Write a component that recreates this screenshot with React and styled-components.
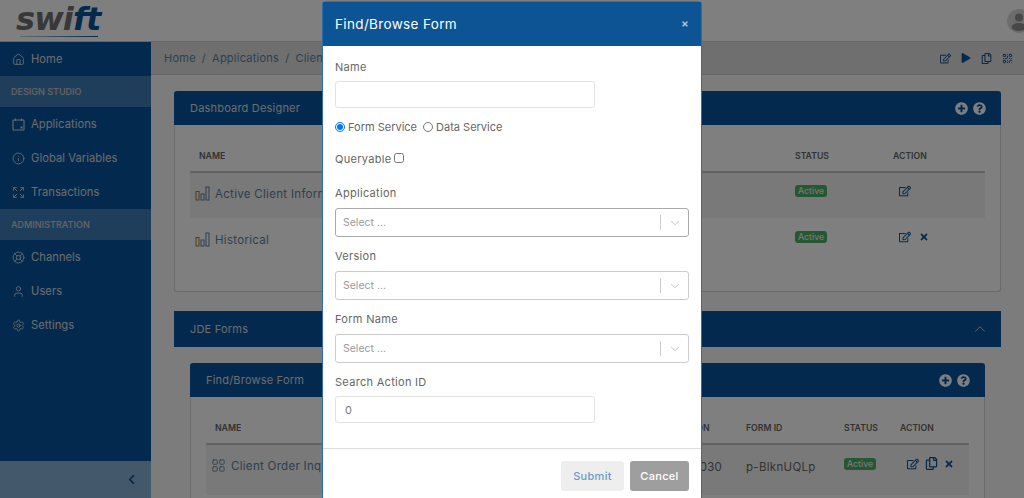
import React from 'react';
import styled, { createGlobalStyle } from 'styled-components';
import {
  FaRegEdit, FaTimes, FaPlay, FaPlusCircle, FaQuestionCircle, FaRegCopy, FaChevronLeft,
} from 'react-icons/fa';
import {
  Home, Info, Expand, LifeBuoy, User, Settings, ChevronDown, ChevronUp, LayoutGrid, Files, QrCode,
} from 'lucide-react';

const GlobalStyle = createGlobalStyle`
  html, body { margin: 0; padding: 0; height: 498px; overflow: hidden; background: #fff; }
  * { box-sizing: border-box; }
  body { font-family: Inter, "Open Sans", sans-serif; color: #555; }
`;

const Page = styled.div`
  position: relative;
  width: 1024px;
  height: 498px;
  overflow: hidden;
  display: flex;
  flex-direction: column;
`;

const Overlay = styled.div`
  position: absolute;
  inset: 0;
  background: rgba(0, 0, 0, 0.5);
`;

const TopBar = styled.header`
  height: 42px;
  flex: none;
  display: flex;
  align-items: center;
  justify-content: space-between;
  padding: 0 0 0 16px;
  background: #fff;
  border-bottom: 1px solid #ccc;
`;

const Logo = styled.div`
  position: relative;
  font-family: "DejaVu Sans", sans-serif;
  font-weight: 700;
  font-style: italic;
  font-size: 32px;
  line-height: 36px;
  letter-spacing: -0.9px;
  color: #707070;
  width: 84px;
  height: 36px;
  margin-top: -3px;
  white-space: nowrap;
  &::after {
    content: '';
    position: absolute;
    left: 4px;
    right: 2px;
    bottom: 0;
    height: 1.5px;
    background: linear-gradient(90deg, #c8d4e0, #0b5394);
  }
  span { color: #0b5394; }
`;

const Avatar = styled.div`
  width: 24px;
  height: 24px;
  margin-right: -7px;
  border-radius: 50%;
  background: #d8d8d8;
  color: #909090;
  svg { display: block; }
`;

const Body = styled.div`
  flex: 1;
  display: flex;
  min-height: 0;
`;

const Sidebar = styled.nav`
  width: 151px;
  flex: none;
  display: flex;
  flex-direction: column;
  background: #07559c;
`;

const NavItem = styled.div`
  height: 34px;
  flex: none;
  display: flex;
  align-items: center;
  gap: 6px;
  padding-left: 12px;
  color: #d9d9d9;
  font-size: 11.2px;
  letter-spacing: 0.05px;
  svg { flex: none; }
`;

const NavSection = styled.div`
  height: 31px;
  flex: none;
  display: flex;
  align-items: center;
  padding-left: 11px;
  background: #3c7cb8;
  color: #c4c4c4;
  font-size: 9px;
  font-weight: 600;
`;

const Collapse = styled.div`
  margin-top: auto;
  height: 37px;
  display: flex;
  align-items: center;
  justify-content: flex-end;
  padding-right: 14px;
  background: #88b0d6;
  color: #0b5394;
`;

const Main = styled.main`
  flex: 1;
  min-width: 0;
  background: #f8f8f8;
  overflow: hidden;
`;

const Breadcrumb = styled.div`
  height: 33px;
  display: flex;
  align-items: center;
  justify-content: space-between;
  padding: 0 0 0 13px;
  background: #dedede;
  border-bottom: 1px solid #c8c8c8;
  color: #5d7ea0;
  font-size: 11px;
  letter-spacing: 0.25px;
  white-space: nowrap;
`;

const Crumbs = styled.div`
  display: flex;
  gap: 6px;
`;

const ToolIcons = styled.div`
  display: flex;
  align-items: center;
  gap: 10px;
  margin-right: -11px;
  color: #0b5394;
`;

const Content = styled.div`
  padding: 16px 23px 0;
`;

const Panel = styled.section`
  background: #fff;
  border: 1px solid #d4d4d4;
  border-top: 0;
  border-radius: 3px;
  min-height: ${(p) => p.$minHeight || 0}px;
  margin: ${(p) => (p.$inner ? '16px 16px 0' : '0')};
`;

const PanelHeader = styled.div`
  height: 34px;
  margin: 0 -1px;
  display: flex;
  align-items: center;
  justify-content: space-between;
  padding: 0 15px 0 16px;
  background: #07559c;
  border-radius: 3px 3px 0 0;
  color: #d9d9d9;
  font-size: 11px;
  letter-spacing: 0.2px;
`;

const HeaderIcons = styled.div`
  display: flex;
  gap: 5px;
  color: #fff;
`;

const SectionBar = styled(PanelHeader)`
  height: 36px;
  margin: 19px 0 0;
  border-radius: 0;
  padding-right: 12px;
`;

const TableWrap = styled.div`
  padding: ${(p) => p.$top}px 15px 0;
`;

const Row = styled.div`
  display: grid;
  grid-template-columns: ${(p) => p.$cols};
  padding: 0 9px;
  height: ${(p) => p.$height}px;
  background: ${(p) => (p.$striped ? '#f2f2f2' : 'transparent')};
  align-items: ${(p) => (p.$head ? 'center' : 'start')};
  white-space: nowrap;
`;

const HeadRow = styled(Row)`
  border-bottom: 2px solid #c4c4c4;
  color: #666;
  font-size: 8.7px;
  font-weight: 600;
`;

const NameCell = styled.div`
  display: flex;
  align-items: center;
  gap: 5px;
  margin: ${(p) => p.$top || 13}px 0 0 -4px;
  color: #5d7ea0;
  font-size: 11.5px;
  letter-spacing: 0.3px;
`;

const DataCell = styled.div`
  margin-top: 15px;
  color: #666;
  font-size: 11.5px;
  letter-spacing: 0.3px;
`;

const Badge = styled.span`
  display: inline-block;
  margin-top: ${(p) => p.$top || 12}px;
  padding: 1px 3px;
  width: 32px;
  background: #4caf6a;
  border-radius: 3px;
  color: #e4f1e8;
  font-size: 8.7px;
  line-height: 10px;
  font-weight: 500;
  text-align: center;
`;

const Actions = styled.div`
  display: flex;
  align-items: center;
  gap: ${(p) => p.$gap || 7}px;
  margin: ${(p) => p.$top || 12}px 0 0 ${(p) => p.$left || 6}px;
  color: #0b5394;
`;

const Modal = styled.div`
  position: absolute;
  left: 322px;
  top: 1px;
  width: 380px;
  height: 520px;
  background: #fff;
  border: 1px solid #2a6db0;
  border-top-color: #666;
  border-radius: 4px 4px 0 0;
`;

const ModalHeader = styled.div`
  height: 44px;
  display: flex;
  align-items: center;
  justify-content: space-between;
  padding: 0 12px;
  background: #0d5495;
  color: #fff;
  font-size: 13.5px;
  letter-spacing: 0.35px;
`;

const CloseMark = styled.span`
  color: #b4c6d9;
  display: flex;
`;

const ModalBody = styled.div`
  padding: 13px 12px 0;
`;

const Label = styled.div`
  height: 16px;
  line-height: 16px;
  color: #666;
  font-size: 11px;
  letter-spacing: 0.3px;
  margin-top: ${(p) => p.$top || 0}px;
`;

const TextInput = styled.input`
  display: block;
  width: 260px;
  height: 27px;
  margin-top: ${(p) => p.$top || 6}px;
  padding: 0 9px;
  border: 1px solid #e2e2e2;
  border-radius: 3px;
  color: #777;
  font: 11px Inter, sans-serif;
  outline: none;
`;

const RadioRow = styled.label`
  display: flex;
  align-items: center;
  height: 16px;
  margin-top: ${(p) => p.$top || 0}px;
  color: #666;
  font-size: 11px;
  input { margin: 0 3px 0 0; width: 10px; height: 10px; }
  input + span + input { margin-left: 6px; margin-top: -1px; }
`;

const CheckRow = styled(RadioRow)`
  letter-spacing: 0.3px;
  input { margin: 0 0 2px 3px; width: 10px; height: 10px; }
`;

const SelectBox = styled.div`
  width: 354px;
  height: 29px;
  margin-top: 7px;
  display: flex;
  align-items: center;
  padding-left: 7px;
  border: 1px solid ${(p) => (p.$dark ? '#aaa' : '#ccc')};
  border-radius: 3px;
  color: #999;
  font-size: 10.5px;
`;

const SelectArrow = styled.div`
  margin-left: auto;
  width: 28px;
  height: 15px;
  display: flex;
  align-items: center;
  justify-content: center;
  border-left: 1px solid #ccc;
  color: #bbb;
`;

const ModalFooter = styled.div`
  margin-top: 25px;
  border-top: 1px solid #dcdcdc;
  display: flex;
  justify-content: flex-end;
  gap: 6px;
  padding: 12px 12px 0;
`;

const Button = styled.button`
  height: 30px;
  width: ${(p) => p.$width}px;
  padding: 0;
  border: 0;
  border-radius: 3px;
  background: ${(p) => (p.$primary ? '#eeeeee' : '#9e9e9e')};
  color: ${(p) => (p.$primary ? '#6d9ac9' : '#fff')};
  font: 500 11px Inter, sans-serif;
  letter-spacing: 0.3px;
`;

// three outlined bars, drawn because no package has this exact glyph
const BarsIcon = () => (
  <svg width="15" height="15" viewBox="0 0 15 15" fill="none" stroke="#a87a30" strokeWidth="1">
    <rect x="1" y="5.5" width="3" height="8.5" />
    <rect x="6" y="8" width="3" height="6" stroke="#5d7ea0" />
    <rect x="11" y="1" width="3" height="13" stroke="#5d7ea0" />
  </svg>
);

// square with two tabs on top and a filled corner
const AppsIcon = ({ size }) => (
  <svg width={size} height={size} viewBox="0 0 13 13" fill="none" stroke="currentColor" strokeWidth="1.1">
    <rect x="1" y="2" width="11" height="10" rx="0.5" />
    <path d="M3.5 0.5v2.5M9.5 0.5v2.5" />
    <rect x="8.5" y="8.5" width="2" height="2" fill="currentColor" stroke="none" />
  </svg>
);

const navTop = [
  { icon: AppsIcon, label: 'Applications' },
  { icon: Info, label: 'Global Variables' },
  { icon: Expand, label: 'Transactions' },
];

const navBottom = [
  { icon: LifeBuoy, label: 'Channels' },
  { icon: User, label: 'Users' },
  { icon: Settings, label: 'Settings' },
];

const dashCols = '1fr 98px 83px';
const formCols = '1fr 75px 98px 56px 60px';

const NavRow = ({ icon: Icon, label }) => (
  <NavItem>
    <Icon size={13} strokeWidth={1.6} />
    {label}
  </NavItem>
);

const PanelIcons = () => (
  <HeaderIcons>
    <FaPlusCircle size={13} />
    <FaQuestionCircle size={13} />
  </HeaderIcons>
);

const Select = ({ dark }) => (
  <SelectBox $dark={dark}>
    Select ...
    <SelectArrow>
      <ChevronDown size={14} strokeWidth={1.5} />
    </SelectArrow>
  </SelectBox>
);

export default function App() {
  return (
    <Page>
      <GlobalStyle />
      <TopBar>
        <Logo>swi<span>ft</span></Logo>
        <Avatar>
          <svg width="24" height="24" viewBox="0 0 24 24" fill="currentColor">
            <circle cx="12" cy="8.5" r="4" />
            <ellipse cx="12" cy="18" rx="7.5" ry="4" />
          </svg>
        </Avatar>
      </TopBar>
      <Body>
        <Sidebar>
          <NavRow icon={Home} label="Home" />
          <NavSection>DESIGN STUDIO</NavSection>
          {navTop.map((n) => <NavRow key={n.label} {...n} />)}
          <NavSection>ADMINISTRATION</NavSection>
          {navBottom.map((n) => <NavRow key={n.label} {...n} />)}
          <Collapse><FaChevronLeft size={11} /></Collapse>
        </Sidebar>
        <Main>
          <Breadcrumb>
            <Crumbs>
              <span>Home</span><span>/</span><span>Applications</span><span>/</span><span>Client Order Inquiry</span>
            </Crumbs>
            <ToolIcons>
              <FaRegEdit size={11} />
              <FaPlay size={10} />
              <FaRegCopy size={11} />
              <QrCode size={11} />
              <Files size={12} />
            </ToolIcons>
          </Breadcrumb>
          <Content>
            <Panel $minHeight={201}>
              <PanelHeader>
                Dashboard Designer
                <PanelIcons />
              </PanelHeader>
              <TableWrap $top={16}>
                <HeadRow $head $cols={dashCols} $height={32}>
                  <span>NAME</span><span>STATUS</span><span>ACTION</span>
                </HeadRow>
                <Row $striped $cols={dashCols} $height={45}>
                  <NameCell><BarsIcon />Active Client Information</NameCell>
                  <div><Badge>Active</Badge></div>
                  <Actions><FaRegEdit size={12} /></Actions>
                </Row>
                <Row $cols={dashCols} $height={45}>
                  <NameCell $top={14}><BarsIcon />Historical</NameCell>
                  <div><Badge $top={13}>Active</Badge></div>
                  <Actions $top={13} $gap={8}><FaRegEdit size={12} /><FaTimes size={10} /></Actions>
                </Row>
              </TableWrap>
            </Panel>
            <SectionBar>
              JDE Forms
              <ChevronUp size={18} strokeWidth={1.2} />
            </SectionBar>
            <Panel $inner $minHeight={160}>
              <PanelHeader>
                Find/Browse Form
                <PanelIcons />
              </PanelHeader>
              <TableWrap $top={16}>
                <HeadRow $head $cols={formCols} $height={32}>
                  <span>NAME</span><span>VERSION</span><span>FORM ID</span><span>STATUS</span><span>ACTION</span>
                </HeadRow>
                <Row $striped $cols={formCols} $height={50}>
                  <NameCell><LayoutGrid size={15} strokeWidth={1.4} />Client Order Inquiry</NameCell>
                  <DataCell>ZD01030</DataCell>
                  <DataCell>p-BlknUQLp</DataCell>
                  <div><Badge $top={13}>Active</Badge></div>
                  <Actions $top={12} $left={7} $gap={6}>
                    <FaRegEdit size={12} />
                    <FaRegCopy size={13} />
                    <FaTimes size={10} />
                  </Actions>
                </Row>
              </TableWrap>
            </Panel>
          </Content>
        </Main>
      </Body>
      <Overlay />
      <Modal>
        <ModalHeader>
          Find/Browse Form
          <CloseMark><FaTimes size={8} /></CloseMark>
        </ModalHeader>
        <ModalBody>
          <Label>Name</Label>
          <TextInput />
          <RadioRow $top={11}>
            <input type="radio" name="svc" defaultChecked />
            <span>Form Service</span>
            <input type="radio" name="svc" />
            <span>Data Service</span>
          </RadioRow>
          <CheckRow $top={16}>
            <span>Queryable</span>
            <input type="checkbox" />
          </CheckRow>
          <Label $top={18}>Application</Label>
          <Select dark />
          <Label $top={11}>Version</Label>
          <Select />
          <Label $top={11}>Form Name</Label>
          <Select />
          <Label $top={11}>Search Action ID</Label>
          <TextInput defaultValue="0" />
        </ModalBody>
        <ModalFooter>
          <Button $primary $width={63}>Submit</Button>
          <Button $width={59}>Cancel</Button>
        </ModalFooter>
      </Modal>
    </Page>
  );
}
